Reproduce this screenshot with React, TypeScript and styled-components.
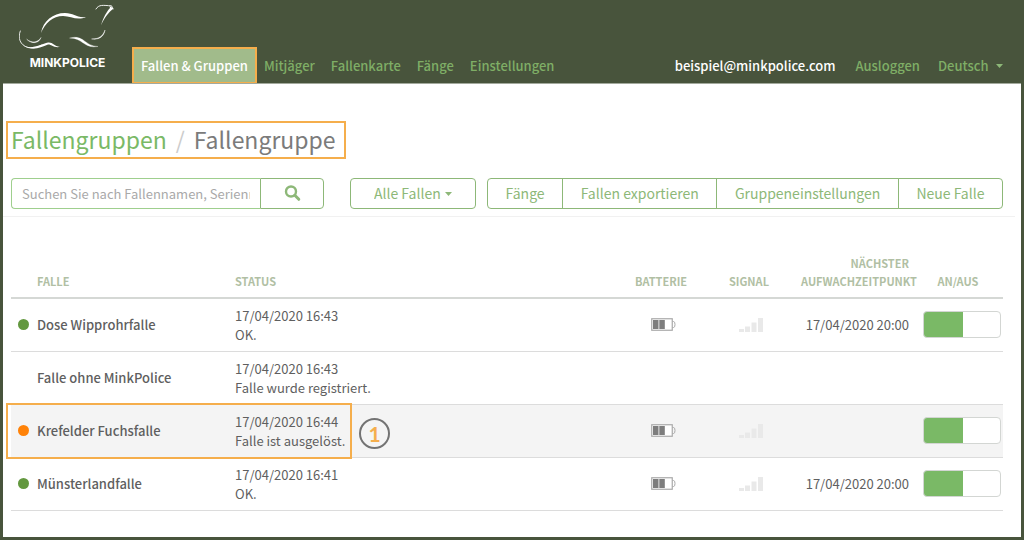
import React from 'react';
import styled, { createGlobalStyle } from 'styled-components';

const color = {
  frame: '#48543c',
  navLink: '#7fae66',
  navActive: '#a1bb8b',
  mark: '#f5ae4c',
  green: '#7ab966',
  button: '#8db878',
  text: '#5f5f5f',
  head: '#b1bfa4',
  line: '#dcdcdc',
};

const GlobalStyle = createGlobalStyle`
  * { box-sizing: border-box; }
  body {
    margin: 0;
    background: ${color.frame};
    color: ${color.text};
    font-family: "Noto Sans CJK SC", "Noto Sans", sans-serif;
    font-size: 13px;
    line-height: 19px;
  }
  button, input, select { font: inherit; }
`;

const Page = styled.div`
  display: flex;
  flex-direction: column;
  min-height: 100vh;
  padding: 0 3px 3px;
`;

const Header = styled.header`
  display: flex;
  align-items: flex-end;
  height: 83px;
  padding-right: 18px;
`;

const Logo = styled.a`
  display: flex;
  flex-direction: column;
  align-items: center;
  align-self: flex-start;
  width: 97px;
  margin: 4px 17px 0 16px;
  color: #fff;
  font-family: Inter, sans-serif;
  font-size: 12px;
  font-weight: 700;
  line-height: 22px;
  text-decoration: none;
`;

const Nav = styled.nav`
  display: flex;
  flex: 1;
`;

const NavLink = styled.a<{ $active?: boolean; $strong?: boolean }>`
  padding: 0 8px;
  color: ${(p) => (p.$active || p.$strong ? '#fff' : color.navLink)};
  background: ${(p) => (p.$active ? color.navActive : 'transparent')};
  outline: ${(p) => (p.$active ? `2px solid ${color.mark}` : 'none')};
  outline-offset: -1px;
  font-weight: 500;
  line-height: 35px;
  text-decoration: none;
`;

const Account = styled.div`
  display: flex;
  gap: 4px;
`;

const SelectWrap = styled.label`
  display: grid;
  align-items: center;
  > * { grid-area: 1 / 1; }
  > svg { justify-self: end; pointer-events: none; }
`;

const LanguageSelect = styled.select`
  width: 71px;
  height: 35px;
  padding: 0 0 0 6px;
  border: 0;
  background: transparent;
  color: ${color.navLink};
  font-weight: 500;
  appearance: none;
`;

const Main = styled.main`
  flex: 1;
  padding: 37px 18px 25px 8px;
  border-top: 1px solid #a3aa9d;
  background: #fff;
`;

const Title = styled.h1`
  display: inline-flex;
  gap: 9px;
  margin: 0 0 0 -5px;
  padding: 0 8px 2px 3px;
  border: 2px solid ${color.mark};
  color: #7b7b7b;
  font-size: 23px;
  font-weight: 400;
  line-height: 32px;
  a { color: ${color.green}; text-decoration: none; }
  span { color: #ccc; }
`;

const Toolbar = styled.div`
  display: flex;
  margin: 19px -12px 0 -8px;
  padding: 0 12px 7px 8px;
  border-bottom: 1px solid #f1f1f1;
`;

const Search = styled.form`
  display: flex;
  flex: 1;
  height: 31px;
  margin-right: 26px;
`;

const SearchInput = styled.input`
  flex: 1;
  min-width: 0;
  padding: 0 10px;
  border: 1px solid #9fcf8e;
  border-right: 0;
  border-radius: 4px 0 0 4px;
  color: ${color.text};
  &::placeholder { color: #a9a9a9; opacity: 1; }
`;

const Button = styled.button`
  height: 31px;
  padding: 0 17px;
  border: 1px solid ${color.button};
  background: #fff;
  color: ${color.button};
  font-size: 14px;
`;

const SearchButton = styled(Button)`
  display: flex;
  align-items: center;
  justify-content: center;
  width: 64px;
  border-radius: 0 4px 4px 0;
`;

const FilterSelect = styled.select`
  width: 126px;
  height: 31px;
  padding: 0 0 0 23px;
  border: 1px solid ${color.button};
  border-radius: 4px;
  background: #fff;
  color: ${color.button};
  font-size: 14px;
  appearance: none;
`;

const FilterWrap = styled(SelectWrap)`
  margin-right: 11px;
  > svg { margin-right: 24px; }
`;

const ButtonGroup = styled.div`
  display: flex;
  flex: 0 0 516px;
  ${Button} { flex: 1 1 auto; }
  ${Button} + ${Button} { margin-left: -1px; }
  ${Button}:first-child { border-radius: 4px 0 0 4px; }
  ${Button}:last-child { border-radius: 0 4px 4px 0; }
`;

const Table = styled.table`
  width: 100%;
  margin-top: 33px;
  border-collapse: collapse;
  table-layout: fixed;
`;

const HeadCell = styled.th<{ $width?: string; $align?: string }>`
  width: ${(p) => p.$width ?? 'auto'};
  padding: 4px 0 7px;
  border-bottom: 2px solid #d5d8d5;
  color: ${color.head};
  font-size: 11px;
  font-weight: 700;
  line-height: 18px;
  text-align: ${(p) => p.$align ?? 'left'};
  vertical-align: bottom;
  &:first-child { padding-left: 26px; }
  &:last-child { padding-left: 4px; }
`;

const WakeHead = styled(HeadCell)`
  padding-left: 8px;
`;

const Row = styled.tr<{ $marked?: boolean }>`
  height: 53px;
  background: ${(p) => (p.$marked ? '#f4f4f4' : '#fff')};
`;

const Cell = styled.td<{ $align?: string }>`
  position: relative;
  padding: 0;
  border-bottom: 1px solid ${color.line};
  text-align: ${(p) => p.$align ?? 'left'};
`;

const IconCell = styled(Cell)`
  padding-left: 4px;
  > svg { display: block; margin: 0 auto; }
`;

const Name = styled.div`
  display: flex;
  align-items: center;
  gap: 8px;
  padding-left: 7px;
  font-weight: 500;
`;

const Dot = styled.span<{ $color: string }>`
  width: 11px;
  height: 11px;
  border-radius: 50%;
  background: ${(p) => p.$color};
`;

const Highlight = styled.div`
  position: absolute;
  top: -2px;
  left: -5px;
  width: 346px;
  height: 56px;
  border: 2px solid ${color.mark};
  pointer-events: none;
`;

const Marker = styled.div`
  position: absolute;
  top: 13px;
  left: 348px;
  width: 31px;
  height: 31px;
  border: 2px solid #737373;
  border-radius: 50%;
  color: ${color.mark};
  font-family: Lato, sans-serif;
  font-size: 21px;
  font-weight: 700;
  line-height: 27px;
  text-align: center;
`;

const Toggle = styled.input`
  display: block;
  width: 78px;
  height: 27px;
  margin: 0 2px 0 auto;
  border: 1px solid #d3d6d3;
  border-radius: 4px;
  background: linear-gradient(to right, ${color.green} 40px, #fff 40px) border-box;
  appearance: none;
`;

const Caret = () => (
  <svg width="7" height="4" viewBox="0 0 7 4" aria-hidden="true">
    <path d="M0 0h7L3.5 4z" fill={color.button} />
  </svg>
);

const MinkDrawing = () => (
  <svg width="97" height="48" viewBox="19 4 97 48" fill="none" stroke="#fff" strokeLinecap="round" aria-hidden="true">
    <path d="M41 33C43 21 53 13 65 13C74 13 76 18 86 17C77 21 71 16 63 16C53 16 45 23 41 33Z" fill="#fff" stroke="none" />
    <path d="M20.300 31C17.500 38 20 45 28 47.500C34 49 38 47 42 45" strokeWidth="1" strokeOpacity=".85" />
    <path d="M23 45.500C32 50 41 44 48 42.500C53 42 54 46 60 47C53 48 51 44 48 44.500C40 48 32 51 23 45.500Z" fill="#fff" stroke="none" />
    <path d="M27 39.500C31 43 38 43 41 37.500C39 44 31 44 27 39.500Z" fill="#fff" strokeWidth=".4" />
    <path d="M70 38C84 34 84 46 98 46.500C84 49 83 38 70 38Z" fill="#fff" strokeWidth=".3" />
    <path d="M92 39C99 39 103 36 105 30C104 36 100 40 92 39Z" fill="#fff" strokeWidth=".4" />
    <path d="M96 9C99 4 103 5.500 111.500 5.800L113 9" strokeWidth="1" strokeOpacity=".9" />
    <path d="M109.500 6L113.500 8.500C109 12 104 18 101 25.500C103 18 107 11 110 8Z" fill="#fff" stroke="none" />
  </svg>
);

const SearchIcon = () => (
  <svg width="17" height="17" viewBox="0 0 17 17" fill="none" stroke={color.button} aria-hidden="true">
    <circle cx="7" cy="6.500" r="5" strokeWidth="2.400" />
    <path d="M10.800 10.300L14.800 14.300" strokeWidth="3" strokeLinecap="round" />
  </svg>
);

const BatteryIcon = () => (
  <svg width="25" height="13" viewBox="0 0 25 13" role="img" aria-label="Batterie">
    <rect x=".75" y=".75" width="20.500" height="11.500" fill="#fff" stroke="#a9a9a9" strokeWidth="1.200" />
    <rect x="2" y="2" width="5.500" height="9" fill="#7d7d7d" />
    <rect x="8.300" y="2" width="5.500" height="9" fill="#7d7d7d" />
    <path d="M21.500 3.500h1q1.500 0 1.500 3t-1.500 3h-1" fill="none" stroke="#a9a9a9" />
  </svg>
);

const SignalIcon = () => (
  <svg width="24" height="14" viewBox="0 0 24 14" fill="#e9e9e9" role="img" aria-label="Signal">
    <path d="M0 11h5v3H0zM6 8.500h5V14H6zM12.500 4.500h5V14h-5zM19 0h5v14h-5z" />
  </svg>
);

type Trap = {
  name: string;
  dot: string;
  time: string;
  status: string;
  device: boolean;
  wake?: string;
  marked?: boolean;
};

const traps: Trap[] = [
  { name: 'Dose Wipprohrfalle', dot: '#63983f', time: '17/04/2020 16:43', status: 'OK.', device: true, wake: '17/04/2020 20:00' },
  { name: 'Falle ohne MinkPolice', dot: 'transparent', time: '17/04/2020 16:43', status: 'Falle wurde registriert.', device: false },
  { name: 'Krefelder Fuchsfalle', dot: '#ff8208', time: '17/04/2020 16:44', status: 'Falle ist ausgelöst.', device: true, marked: true },
  { name: 'Münsterlandfalle', dot: '#63983f', time: '17/04/2020 16:41', status: 'OK.', device: true, wake: '17/04/2020 20:00' },
];

export default function App() {
  return (
    <>
      <GlobalStyle />
      <Page>
        <Header>
          <Logo href="#">
            <MinkDrawing />
            MINKPOLICE
          </Logo>
          <Nav>
            <NavLink href="#" $active>Fallen &amp; Gruppen</NavLink>
            <NavLink href="#">Mitjäger</NavLink>
            <NavLink href="#">Fallenkarte</NavLink>
            <NavLink href="#">Fänge</NavLink>
            <NavLink href="#">Einstellungen</NavLink>
          </Nav>
          <Account>
            <NavLink href="#" $strong>beispiel@minkpolice.com</NavLink>
            <NavLink href="#">Ausloggen</NavLink>
            <SelectWrap>
              <LanguageSelect aria-label="Sprache">
                <option>Deutsch</option>
              </LanguageSelect>
              <Caret />
            </SelectWrap>
          </Account>
        </Header>
        <Main>
          <Title>
            <a href="#">Fallengruppen</a>
            <span>/</span>
            Fallengruppe
          </Title>
          <Toolbar>
            <Search>
              <SearchInput type="text" aria-label="Suche" placeholder="Suchen Sie nach Fallennamen, Seriennummer" />
              <SearchButton type="button" aria-label="Suchen">
                <SearchIcon />
              </SearchButton>
            </Search>
            <FilterWrap>
              <FilterSelect aria-label="Filter">
                <option>Alle Fallen</option>
              </FilterSelect>
              <Caret />
            </FilterWrap>
            <ButtonGroup>
              <Button type="button">Fänge</Button>
              <Button type="button">Fallen exportieren</Button>
              <Button type="button">Gruppeneinstellungen</Button>
              <Button type="button">Neue Falle</Button>
            </ButtonGroup>
          </Toolbar>
          <Table>
            <thead>
              <tr>
                <HeadCell $width="224px">FALLE</HeadCell>
                <HeadCell>STATUS</HeadCell>
                <HeadCell $width="88px" $align="center">BATTERIE</HeadCell>
                <HeadCell $width="88px" $align="center">SIGNAL</HeadCell>
                <WakeHead $width="116px" $align="right">NÄCHSTER AUFWACHZEITPUNKT</WakeHead>
                <HeadCell $width="94px" $align="center">AN/AUS</HeadCell>
              </tr>
            </thead>
            <tbody>
              {traps.map((trap) => (
                <Row key={trap.name} $marked={trap.marked}>
                  <Cell>
                    <Name>
                      <Dot $color={trap.dot} />
                      {trap.name}
                    </Name>
                    {trap.marked && (
                      <>
                        <Highlight />
                        <Marker>1</Marker>
                      </>
                    )}
                  </Cell>
                  <Cell>
                    {trap.time}
                    <br />
                    {trap.status}
                  </Cell>
                  <IconCell>{trap.device && <BatteryIcon />}</IconCell>
                  <IconCell>{trap.device && <SignalIcon />}</IconCell>
                  <Cell $align="right">{trap.wake}</Cell>
                  <Cell>
                    {trap.device && <Toggle type="checkbox" defaultChecked aria-label={`${trap.name} an/aus`} />}
                  </Cell>
                </Row>
              ))}
            </tbody>
          </Table>
        </Main>
      </Page>
    </>
  );
}
